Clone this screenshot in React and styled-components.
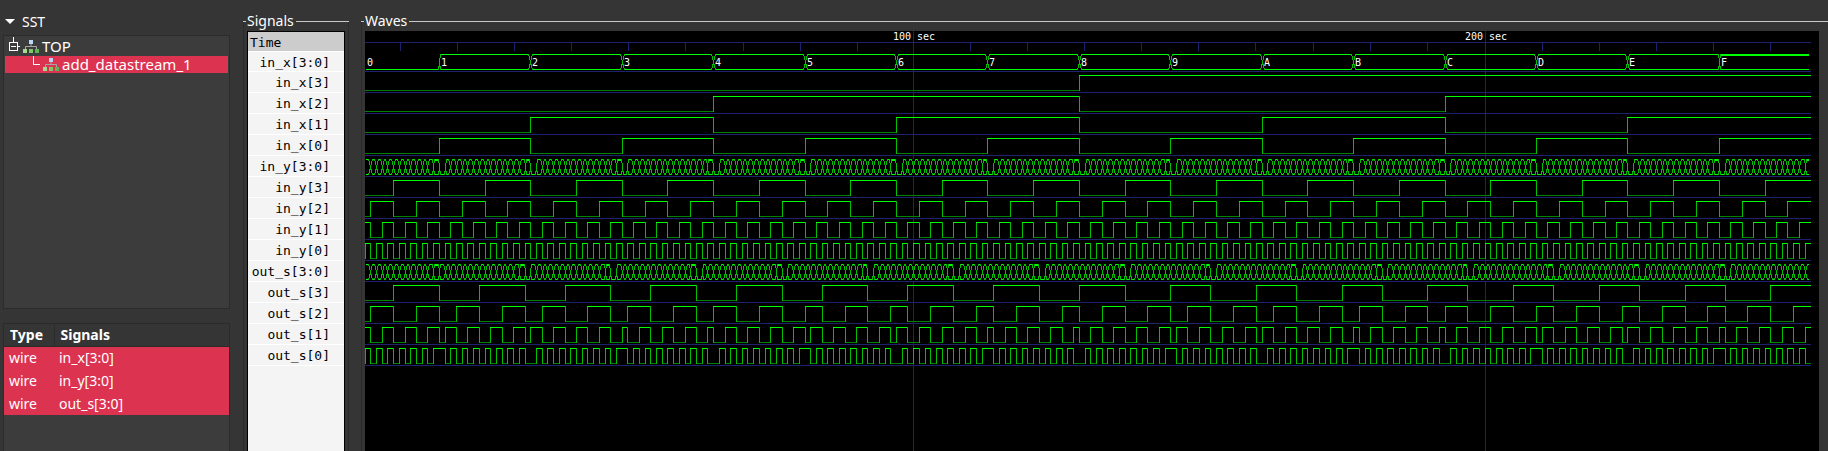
import React from 'react';
import styled, { createGlobalStyle } from 'styled-components';

const UI = '"Noto Sans", "Open Sans", sans-serif';
const MONO = '"DejaVu Sans Mono", "Liberation Mono", monospace';

const GlobalStyle = createGlobalStyle`
  * { box-sizing: border-box; }
  body { margin: 0; background: #353535; color: #fff; font: 15px/20px ${UI}; }
`;

const Page = styled.main`
  display: flex;
  gap: 12px;
  min-height: 100vh;
  padding-left: 3px;
`;

const Sidebar = styled.aside`
  display: flex;
  flex-direction: column;
  flex: none;
  width: 227px;
  margin-right: 1px;
`;

const SectionToggle = styled.button`
  display: flex;
  align-items: center;
  gap: 7px;
  height: 24px;
  margin: 10px 0 1px;
  padding: 0 0 0 2px;
  border: 0;
  background: none;
  color: #fff;
  font: 14px/20px ${UI};
`;

const Tree = styled.ul`
  height: 274px;
  margin: 0 0 14px;
  padding: 1px;
  border: 1px solid #2b2b2b;
  background: #3c3c3c;
  list-style: none;
`;

const TreeItem = styled.li`
  display: flex;
  align-items: center;
  height: ${p => (p.$selected ? 17 : 19)}px;
  padding-left: ${p => (p.$selected ? 24 : 3)}px;
  background: ${p => (p.$selected ? '#dc3350' : 'none')};
  font-size: 15px;
  line-height: 17px;
  white-space: nowrap;
`;

const Branch = styled.svg`
  flex: none;
  align-self: flex-start;
  margin-right: 3px;
`;

const NodeIcon = styled.svg`
  flex: none;
  margin-right: 3px;
`;

const ListBox = styled.div`
  flex: 1;
  border: 1px solid #2b2b2b;
  border-bottom: 0;
  background: #3c3c3c;
`;

const Table = styled.table`
  width: 100%;
  border-collapse: collapse;
  table-layout: fixed;
  font-size: 14px;
  text-align: left;
  th {
    height: 22px;
    padding: 0 6px;
    border-bottom: 1px solid #2b2b2b;
    background: #353535;
    line-height: 20px;
  }
  th:first-child { width: 50px; border-right: 1px solid #2b2b2b; }
  td { height: 23px; padding: 0 5px; background: #dc3350; line-height: 20px; }
`;

const Group = styled.section`
  display: flex;
  flex-direction: column;
  flex: ${p => (p.$grow ? '1' : 'none')};
  width: ${p => (p.$grow ? 'auto' : '106px')};
  min-width: 0;
`;

const GroupTitle = styled.h2`
  display: flex;
  align-items: center;
  gap: 1px;
  height: 22px;
  margin: 10px 0 -10px;
  font: 14px/20px ${UI};
  &::before, &::after { content: ''; height: 1px; background: #c8c8c8; }
  &::before { width: 3px; }
  &::after { flex: 1; margin-left: 1px; }
`;

const GroupBody = styled.div`
  display: flex;
  flex: 1;
  padding: 9px ${p => (p.$wide ? 9 : 3)}px 0 3px;
  border-left: 1px solid #2b2b2b;
  border-right: ${p => (p.$wide ? '0' : '1px solid #2b2b2b')};
`;

const SignalList = styled.ul`
  flex: 1;
  margin: 0;
  padding: 0;
  border: 1px solid #000;
  border-bottom: 0;
  background: #f4f4f4;
  color: #000;
  font: 13px/22px ${MONO};
  list-style: none;
`;

const SignalName = styled.li`
  height: ${p => (p.$short || p.$time ? 20 : 21)}px;
  padding: 0 ${p => (p.$time ? 3 : 14)}px 0 2px;
  border-bottom: 1px solid #fff;
  background: ${p => (p.$time ? '#cccccc' : 'none')};
  text-align: ${p => (p.$time ? 'left' : 'right')};
  white-space: nowrap;
`;

const WavePanel = styled.div`
  flex: 1;
  min-width: 0;
  overflow: hidden;
  background: #000;
`;

const WaveSvg = styled.svg`
  display: block;
  width: 100%;
  height: 100%;
  min-height: 420px;
  shape-rendering: crispEdges;
  text { fill: #fff; font: 10px ${MONO}; }
`;

const WIDTH = 1446;
const ORIGIN = -22.8;
const FIRST = 4;
const LAST = 256;
const at = t => Math.floor(ORIGIN + (t * 40) / 7);

const inX = t => Math.floor((t - 1) / 16) & 15;
const inY = t => (t - 1) & 15;
const outS = t => (inX(t) + inY(t)) & 15;

const signals = [];
[['in_x', inX], ['in_y', inY], ['out_s', outS]].forEach(([name, fn]) => {
  signals.push({ name: `${name}[3:0]`, fn, labels: name === 'in_x' });
  for (let b = 3; b >= 0; b--) signals.push({ name: `${name}[${b}]`, fn: t => (fn(t) >> b) & 1, bit: true });
});

function segmentsOf(fn) {
  const list = [];
  for (let t = FIRST; t <= LAST; t++) {
    const value = fn(t);
    const last = list[list.length - 1];
    if (last && last.value === value) last.to = t + 1;
    else list.push({ from: t, to: t + 1, value });
  }
  return list.map((s, i) => ({
    value: s.value,
    x0: Math.max(0, at(s.from)),
    x1: i === list.length - 1 ? WIDTH : at(s.to),
  })).filter(s => s.x0 < WIDTH);
}

const h = (x0, x1, y) => (x1 > x0 ? `M${x0} ${y + 0.5}H${x1}` : '');

function BitWave({ fn, base }) {
  const top = base - 17;
  const low = base - 2;
  let high = '';
  let zero = '';
  let edges = '';
  segmentsOf(fn).forEach((s, i) => {
    const end = Math.min(WIDTH, s.x1);
    if (s.value) high += h(s.x0, end, top);
    else zero += h(s.x0, end, low);
    if (i > 0 || (fn(FIRST - 1) !== s.value)) edges += `M${s.x0 + 0.5} ${top}V${low + 1}`;
  });
  return (
    <>
      <path d={zero} stroke="#008000" />
      <path d={edges} stroke="#00c000" />
      <path d={high} stroke="#00ff00" />
    </>
  );
}

function cross(x, top, low, prev, next) {
  const edge = prev === 0 || next === 0 || prev === 15 || next === 15;
  const w = edge ? 1 : 2;
  const mid = (top + low) / 2;
  const col = (dx, y0, y1) => `M${x + dx + 0.5} ${y0}V${y1}`;
  let d = col(0, edge ? mid - 4 : mid - 2, edge ? mid + 5 : mid + 3);
  [-1, 1].forEach(side => {
    const v = side < 0 ? prev : next;
    const up = v !== 0;
    if (w === 1) {
      if (up) d += col(side, top, top + 4);
      d += col(side, low - 3, low + 1);
    } else {
      d += col(2 * side, top, top + 2) + col(side, top + 2, top + 6);
      d += col(2 * side, low - 1, low + 1) + col(side, low - 5, low - 1);
    }
  });
  return d;
}

function BusWave({ fn, base, labels }) {
  const top = base - 17;
  const low = base - 2;
  const segs = segmentsOf(fn);
  let rails = '';
  let edges = '';
  segs.forEach((s, i) => {
    const start = s.x0 + 1;
    const end = Math.min(WIDTH - 2, s.x1);
    rails += h(start, end, low);
    if (s.value !== 0) rails += h(start, end, top);
    if (s.value === 15) rails += h(start, end, top + 1);
    if (i > 0) edges += cross(s.x0, top, low, segs[i - 1].value, s.value);
  });
  const gaps = segs.slice(1).map(s => `M${s.x0 - 1} ${top + 1}h3M${s.x0 - 1} ${low + 0.5}h3`).join('');
  return (
    <>
      <path d={rails} stroke="#00ff00" />
      <path d={gaps} stroke="#000" strokeWidth="2" />
      <path d={edges} stroke="#00c000" />
      {labels && segs.map(s => (
        <text key={s.x0} x={s.x0 + 2} y={low - 3}>{s.value.toString(16).toUpperCase()}</text>
      ))}
    </>
  );
}

const MAJORS = [
  { x: -22 },
  { x: 548, label: '100 sec' },
  { x: 1120, label: '200 sec' },
];

function Waves() {
  const baseOf = i => 40 + 21 * i;
  let minor = '';
  MAJORS.forEach(m => {
    for (let j = 1; j < 10; j++) {
      const x = m.x + Math.floor((j * 400) / 7);
      if (x > 0 && x < WIDTH) minor += `M${x + 0.5} 11V20`;
    }
  });
  const rules = h(0, WIDTH, 11) + signals.map((s, i) => h(0, WIDTH, baseOf(i))).join('');
  return (
    <WaveSvg role="img" aria-label="Waveforms">
      <path d={rules + minor} stroke="#202070" />
      {MAJORS.filter(m => m.label).map(m => (
        <rect key={m.x} x={m.x} y="0" width="1" height="100%" fill="#202070" />
      ))}
      {signals.map((s, i) => (s.bit
        ? <BitWave key={s.name} fn={s.fn} base={baseOf(i)} />
        : <BusWave key={s.name} fn={s.fn} base={baseOf(i)} labels={s.labels} />))}
      {MAJORS.filter(m => m.label).map(m => (
        <text key={m.x} x={m.x + 1} y="9" textAnchor="middle">{m.label}</text>
      ))}
    </WaveSvg>
  );
}

function HierarchyIcon() {
  return (
    <NodeIcon width="16" height="14" viewBox="0 0 16 14" aria-hidden="true">
      <path d="M8 4v3M2.5 9V6.5h11V9" fill="none" stroke="#a6a6a6" />
      <rect x="6" y="0" width="4" height="4" fill="#b9d8f5" />
      <rect x="0" y="9" width="4" height="4" fill="#a5dc92" />
      <rect x="6" y="9" width="4" height="4" fill="#7cc86b" />
      <rect x="12" y="9" width="4" height="4" fill="#5db454" />
    </NodeIcon>
  );
}

export default function App() {
  return (
    <>
      <GlobalStyle />
      <Page>
        <Sidebar>
          <SectionToggle type="button" aria-expanded="true">
            <svg width="10" height="6" viewBox="0 0 10 6" aria-hidden="true"><path d="M0 0h10L5 5z" fill="#fff" /></svg>
            SST
          </SectionToggle>
          <Tree role="tree" aria-label="SST">
            <TreeItem role="treeitem" aria-expanded="true">
              <Branch width="12" height="19" viewBox="0 0 12 19" aria-hidden="true">
                <path d="M5.5 0v5M1.5 5.5h8v8h-8zM3 9.5h5M10 9.5h2" fill="none" stroke="#fff" shapeRendering="crispEdges" />
              </Branch>
              <HierarchyIcon />
              TOP
            </TreeItem>
            <TreeItem role="treeitem" aria-selected="true" $selected>
              <Branch width="11" height="17" viewBox="0 0 11 17" aria-hidden="true">
                <path d="M4.5 0v8.5H11" fill="none" stroke="#fff" shapeRendering="crispEdges" />
              </Branch>
              <HierarchyIcon />
              add_datastream_1
            </TreeItem>
          </Tree>
          <ListBox>
            <Table>
              <thead>
                <tr><th scope="col">Type</th><th scope="col">Signals</th></tr>
              </thead>
              <tbody>
                {['in_x[3:0]', 'in_y[3:0]', 'out_s[3:0]'].map(name => (
                  <tr key={name}><td>wire</td><td>{name}</td></tr>
                ))}
              </tbody>
            </Table>
          </ListBox>
        </Sidebar>
        <Group>
          <GroupTitle>Signals</GroupTitle>
          <GroupBody>
            <SignalList>
              <SignalName $time>Time</SignalName>
              {signals.map((s, i) => <SignalName key={s.name} $short={i === 0}>{s.name}</SignalName>)}
            </SignalList>
          </GroupBody>
        </Group>
        <Group $grow>
          <GroupTitle>Waves</GroupTitle>
          <GroupBody $wide>
            <WavePanel><Waves /></WavePanel>
          </GroupBody>
        </Group>
      </Page>
    </>
  );
}
